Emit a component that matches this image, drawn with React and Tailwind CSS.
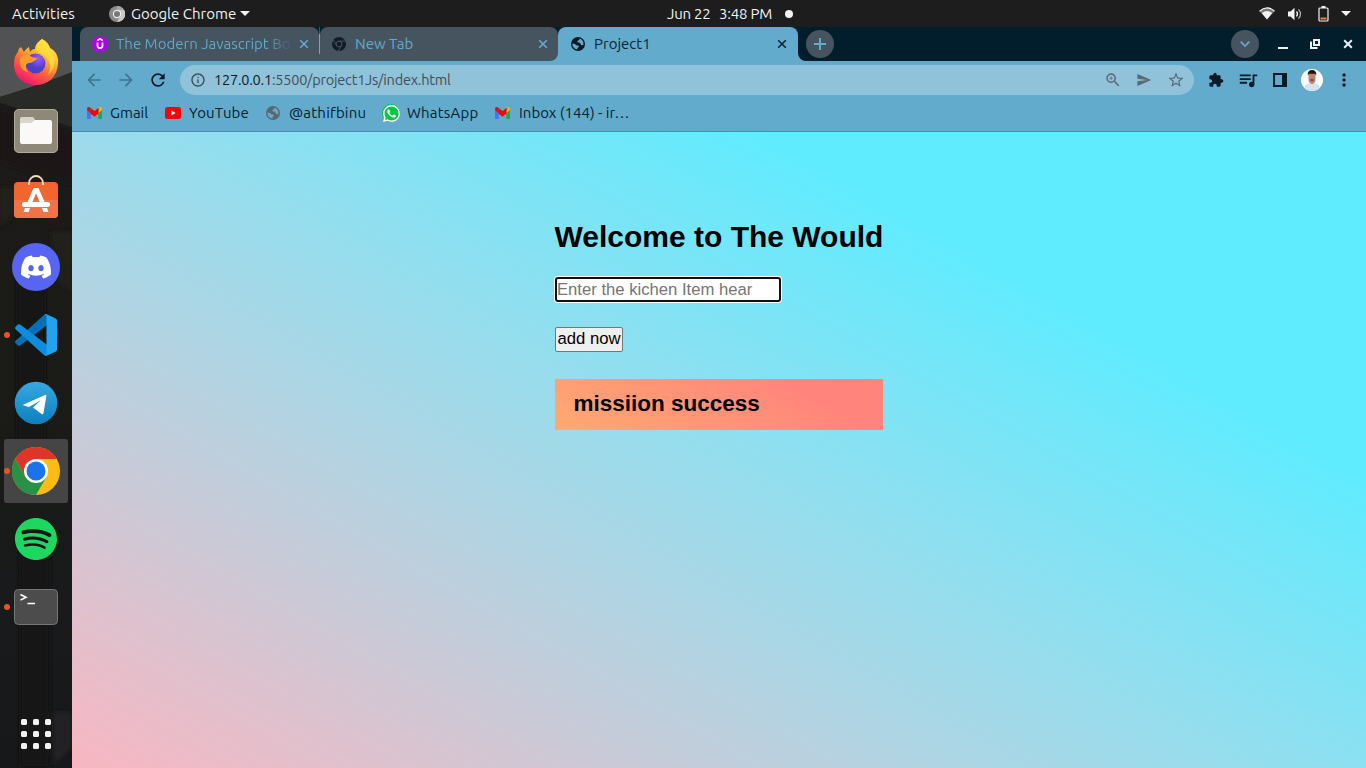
import React from 'react';
import { MdExtension, MdQueueMusic, MdSend, MdStarBorder, MdZoomIn, MdMoreVert, MdInfoOutline, MdArrowBack, MdArrowForward, MdRefresh } from 'react-icons/md';
import { SiDiscord, SiSpotify, SiWhatsapp } from 'react-icons/si';

const Close = ({ className, w = 1.6 }) => (
  <svg className={className} viewBox="0 0 10 10" stroke="currentColor" strokeWidth={w} fill="none"><path d="M1.2 1.2l7.6 7.6M8.8 1.2L1.2 8.8" /></svg>
);

const Globe = ({ className, land }) => (
  <svg className={className} viewBox="0 0 14 14">
    <circle cx="7" cy="7" r="7" fill="currentColor" />
    <path d="M8.300 1.400Q9 2.600 7.800 3.200Q6.400 3.500 6.300 4.600Q6.300 5.600 7.600 5.600Q9.400 5.600 9.600 7Q9.800 8.200 11.200 8.200L12.500 8Q12.900 4.600 11 2.900Q9.800 1.700 8.300 1.400z" fill={land} />
    <path d="M1.400 6.500L4.400 7.200Q5 8.600 6.600 8.400Q8 8.400 7.900 9.600Q7.700 10.500 6.600 10.600L6.400 12.600Q3.700 12.300 2.200 10Q1.200 8.400 1.400 6.500z" fill={land} />
  </svg>
);

const Gmail = () => (
  <svg className="h-[12px] w-[15px] shrink-0" viewBox="52 42 88 66" preserveAspectRatio="none">
    <path fill="#4275f4" d="M58 108h16V72L52 57v45c0 3.320 2.690 6 6 6" />
    <path fill="#1fa84c" d="M118 108h16c3.320 0 6-2.690 6-6V57l-22 15" />
    <path fill="#fbbc04" d="M118 48v28l22-17v-8c0-7.420-8.470-11.650-14.400-7.200" />
    <path fill="#f00" d="M72 78V46l24 18 24-18v32L96 96" />
    <path fill="#d9140f" d="M52 51v8l22 17V48l-7.600-4.200c-5.940-4.450-14.400-.22-14.400 7.200" />
  </svg>
);

function TopBar() {
  return (
    <header className="grid h-[27px] shrink-0 grid-cols-[667px_1fr_auto] items-center bg-[#1d1d1d] text-[15px] leading-none text-[#f2f2f2]">
      <div className="flex items-center">
        <span className="ml-3 w-[97px] whitespace-nowrap tracking-[0.15px]">Activities</span>
        <svg className="h-4 w-4" viewBox="0 0 16 16">
          <circle cx="8" cy="8" r="8" fill="#8b8b8b" />
          <path d="M8 0a8 8 0 0 1 7 4H8z" fill="#a7a7a7" />
          <path d="M8 4h7.200A8 8 0 0 1 8 16l3.500-6z" fill="#c9c9c9" />
          <circle cx="8" cy="8" r="4.200" fill="#eee" />
          <circle cx="8" cy="8" r="3" fill="#777" />
        </svg>
        <span className="ml-[6px] w-[109px] whitespace-nowrap">Google Chrome</span>
        <svg className="h-[5px] w-[10px]" viewBox="0 0 10 5"><path d="M0 0h10L5 5z" fill="currentColor" /></svg>
      </div>
      <div className="flex items-center whitespace-nowrap">
        <span className="w-[52px] tracking-[-0.25px]">Jun 22</span><span className="w-[66px] tracking-[-0.2px]">3:48 PM</span>
        <i className="h-2 w-2 rounded-full bg-[#f2f2f2]" />
      </div>
      <div className="flex items-center pr-[15px]">
        <svg className="h-[13px] w-4" viewBox="0 0 16 13">
          <path d="M.5 4.200Q8-2.600 15.500 4.200L8 12.500z" fill="#777" />
          <path d="M.5 4.200Q8-2.600 15.500 4.200" fill="none" stroke="#f2f2f2" strokeWidth="1.200" />
          <path d="M2.800 6Q8 2.200 13.200 6L8 12.500z" fill="#f2f2f2" />
        </svg>
        <svg className="ml-3 h-[14px] w-4" viewBox="0 0 16 14">
          <path d="M1 4.500h2.500L7.500.8v12.400L3.500 9.500H1z" fill="#f2f2f2" />
          <path d="M9.500 4.500q2 2.500 0 5" fill="none" stroke="#f2f2f2" strokeWidth="1.300" />
          <path d="M11.500 2.300q4 4.700 0 9.400" fill="none" stroke="#aaa" strokeWidth="1.300" />
        </svg>
        <svg className="ml-[15px] mr-[-1px] h-4 w-[11px]" viewBox="0 0 11 16">
          <rect x="1" y="2" width="9" height="13" rx="1" fill="none" stroke="#f2f2f2" strokeWidth="1.200" />
          <path d="M3.500 0h4v2h-4z" fill="#f2f2f2" /><path d="M2.500 11.500h6v2h-6z" fill="#f47b3c" />
        </svg>
        <svg className="ml-[13px] h-[5px] w-[10px]" viewBox="0 0 10 5"><path d="M0 0h10L5 5z" fill="currentColor" /></svg>
      </div>
    </header>
  );
}

const Dot = () => <i className="absolute left-0 top-[29px] h-[6px] w-[6px] rounded-full bg-[#e95420]" />;

function DockItem({ children, active, running }) {
  return (
    <div className={active ? 'relative flex h-16 w-16 items-center justify-center rounded-[3px] bg-[#454545]' : 'relative flex h-16 w-16 items-center justify-center'}>
      {running && <Dot />}
      {children}
    </div>
  );
}

function Wallpaper() {
  return (
    <svg className="absolute inset-0 h-full w-full" viewBox="0 0 72 741" preserveAspectRatio="none">
      <defs>
        <linearGradient id="wall" x2="0" y2="1">
          <stop offset="0" stopColor="#1d1e1b" /><stop offset=".25" stopColor="#1b1a18" /><stop offset=".55" stopColor="#1a1b17" /><stop offset=".75" stopColor="#181a1b" /><stop offset="1" stopColor="#171819" />
        </linearGradient>
        <filter id="soft"><feGaussianBlur stdDeviation="2" /></filter>
      </defs>
      <path fill="url(#wall)" d="M0 0h72v741H0z" />
      <path fill="#515253" d="M0 0h72v47L0 70z" />
      <path fill="#282a26" d="M0 70l30-9 42-16v55L0 76z" />
      <g filter="url(#soft)">
        <path fill="#1a1918" d="M0 78l72 30v50L0 135z" />
        <path fill="#22231a" d="M0 160h14l10 20-24 20zM50 205h22v60l-15-10z" opacity=".7" />
        <path fill="#171615" d="M17 240h28v200H17zM20 500h30v241H20z" />
        <path fill="#222326" d="M53 685h19v35l-18 18z" />
      </g>
    </svg>
  );
}

function Dock() {
  return (
    <aside className="relative flex w-[72px] shrink-0 flex-col bg-[#1a1a19]">
      <Wallpaper />
      <div className="relative flex flex-1 flex-col items-center gap-1 pt-[4px]">
        <DockItem>
          <svg className="h-[48px] w-[48px]" viewBox="0 0 48 48">
            <defs>
              <linearGradient id="fxa" x1=".85" y1="0" x2=".3" y2="1"><stop offset="0" stopColor="#fff14f" /><stop offset=".35" stopColor="#ffbd2e" /><stop offset=".62" stopColor="#ff6a35" /><stop offset="1" stopColor="#ed1472" /></linearGradient>
              <radialGradient id="fxb" cx=".65" cy=".25"><stop offset="0" stopColor="#a05cff" /><stop offset="1" stopColor="#4b3fc4" /></radialGradient>
            </defs>
            <path fill="url(#fxa)" d="M30 0c4 2 7 5 8 9 6 3 9 9 8 16-1 13-10 21-22 21C11 46 2 38 2 25c0-5 1-9 4-12 0-2 1-4 3-5l3 5c1-2 3-4 5-5l1 5c1-2 3-3 5-3 0-3 2-7 7-10z" />
            <path fill="#ffdf3f" d="M30 0c4 2 7 6 8 9 7 9 6 20-2 27 4-8 2-15-2-18-2-3-8-4-9-7-1-4 1-8 5-11z" opacity=".8" />
            <circle cx="23.500" cy="24.500" r="10" fill="url(#fxb)" />
            <path fill="#ff9a2d" d="M8 20c1-3 5-5 9-4 2 2 5 3 8 3l-1 2c-3 1-4 3-7 3-4 0-4 6-1 9-6-1-9-6-8-13z" />
          </svg>
        </DockItem>
        <DockItem>
          <svg className="h-[46px] w-[46px]" viewBox="0 0 46 46">
            <rect x="1" y="1" width="44" height="44" rx="5" fill="#8e8878" /><rect x="1.500" y="1.500" width="43" height="43" rx="4.500" fill="none" stroke="#b1ab9c" />
            <path fill="#d9d4c8" d="M7 11q0-2 2-2h11l3 4h13v6H7z" /><path fill="#faf9f8" d="M7 17q0-2 2-2h9l4-3h15q2 0 2 2v20q0 2-2 2H9q-2 0-2-2z" />
          </svg>
        </DockItem>
        <DockItem>
          <svg className="-mt-[5px] h-[46px] w-[46px]" viewBox="0 0 46 46">
            <rect x="1" y="8" width="44" height="36" rx="4" fill="#f26430" /><path d="M1 26h44v14q0 4-4 4H5q-4 0-4-4z" fill="#ee7448" />
            <path d="M16 11v-2a7 7 0 0 1 14 0v2" fill="none" stroke="#f1dfb7" strokeWidth="1.800" />
            <path d="M20.500 14h5l7.500 17h-5L23 19.500 18.300 31h-5zM12 34h5l-1.500 4h-5zM29 34h5l1.500 4h-5z" fill="#fff" /><rect x="9" y="28" width="28" height="5" rx="2.500" fill="#fff" />
          </svg>
        </DockItem>
        <DockItem><span className="flex h-12 w-12 items-center justify-center rounded-full bg-[#5865f2]"><SiDiscord className="h-[30px] w-[30px] text-white" /></span></DockItem>
        <DockItem running>
          <svg className="h-[42px] w-[42px]" viewBox="0 0 100 100">
            <path fill="#0070b8" d="M96.500 10.800L75.900.9c-2.400-1.100-5.200-.7-7.100 1.200L1.300 63.600c-1.800 1.700-1.800 4.500 0 6.200l5.500 5c1.500 1.300 3.700 1.400 5.300.2L93.300 13.400c2.800-2.100 6.700-.1 6.700 3.300v-.2c0-2.500-1.400-4.700-3.500-5.700z" />
            <path fill="#0d8ddb" d="M96.500 89.200l-20.600 9.900c-2.400 1.100-5.200.7-7.100-1.200L1.300 36.400c-1.800-1.700-1.800-4.500 0-6.200l5.500-5c1.500-1.300 3.700-1.400 5.300-.2L93.300 86.600c2.800 2.100 6.700.1 6.700-3.300v.2c0 2.500-1.400 4.700-3.500 5.700z" />
            <path fill="#22a3f0" d="M75.900 99.100c-2.400 1.200-5.200.7-7.100-1.200 2.300 2.300 6.200.7 6.200-2.600V4.700c0-3.300-3.900-4.900-6.200-2.600 1.900-1.900 4.700-2.400 7.100-1.200l20.600 9.900c2.100 1 3.500 3.200 3.500 5.600v67.200c0 2.400-1.400 4.600-3.500 5.600z" />
          </svg>
        </DockItem>
        <DockItem>
          <svg className="h-[44px] w-[44px]" viewBox="0 0 44 44">
            <defs><linearGradient id="tg" x2="0" y2="1"><stop stopColor="#36a9e2" /><stop offset="1" stopColor="#0d7fbd" /></linearGradient></defs>
            <circle cx="22" cy="22" r="21.300" fill="url(#tg)" /><path fill="#fff" d="M8.500 24L31 14q1.600-.6 1.300 1.300L29.500 32q-.5 2.200-2.200.8L19 26.500l8-7.500-12 7z" />
          </svg>
        </DockItem>
        <DockItem active running>
          <svg className="h-12 w-12" viewBox="0 0 48 48">
            <circle cx="24" cy="24" r="24" fill="#fbbc13" />
            <path d="M3.200 12A24 24 0 0 1 44.800 12H24L13.600 30z" fill="#df3529" />
            <path d="M3.200 12l10.400 18L24 36l10.400-6L24 48A24 24 0 0 1 3.200 12z" fill="#289146" />
            <circle cx="24" cy="24" r="12" fill="#fff" /><circle cx="24" cy="24" r="9.500" fill="#1a73e8" />
          </svg>
        </DockItem>
        <DockItem><span className="rounded-full bg-[#191414]"><SiSpotify className="h-[42px] w-[42px] text-[#1ed760]" /></span></DockItem>
        <DockItem running>
          <svg className="h-[38px] w-[46px]" viewBox="0 0 46 38">
            <rect x="1.500" y="1.500" width="43" height="35" rx="4" fill="#4c4c4c" stroke="#777" />
            <path d="M7.500 6.500l5.500 2.800-5.500 2.800M14.500 15.500h7.500" fill="none" stroke="#fff" strokeWidth="1.600" />
          </svg>
        </DockItem>
        <div className="mb-[19px] mt-auto grid grid-cols-3 gap-[6px]">
          {[0, 1, 2, 3, 4, 5, 6, 7, 8].map((n) => <i key={n} className="h-[6px] w-[6px] rounded-[1.5px] bg-[#f2f2f2]" />)}
        </div>
      </div>
    </aside>
  );
}

function TabStrip() {
  return (
    <div className="flex h-[34px] shrink-0 bg-[#021d2b] text-[15px] text-[#63abcd]">
      <div className="ml-2 flex w-[239px] items-center rounded-t-lg bg-[#46545f] pl-3">
        <svg className="h-4 w-4 shrink-0" viewBox="0 0 16 16">
          <circle cx="8" cy="8" r="8" fill="#b100ef" />
          <path d="M5.200 4.600L8 2.700l2.800 1.900M5.500 6.500v3.200q0 2.300 2.500 2.300t2.500-2.300V6.500" stroke="#fff" strokeWidth="1.700" fill="none" />
        </svg>
        <span className="ml-2 w-[176px] whitespace-nowrap bg-gradient-to-r from-[#63abcd] from-85% to-[#46545f] bg-clip-text text-transparent">The Modern Javascript Bo</span>
        <Close className="ml-[7px] h-[10px] w-[10px]" />
      </div>
      <div className="w-px bg-[#46545f] py-[7px]"><div className="h-full bg-[#63abcd]" /></div>
      <div className="flex w-[238px] bg-[linear-gradient(#021d2b_50%,#63abcd_50%)]">
        <div className="flex flex-1 items-center rounded-t-lg rounded-br-lg bg-[#46545f] pl-3">
          <svg className="h-[14px] w-[14px]" viewBox="0 0 14 14" fill="none" stroke="#46545f">
            <circle cx="7" cy="7" r="7" fill="#111c26" stroke="none" />
            <circle cx="7" cy="7" r="2.900" /><path d="M7 4.100h6.400M4.500 8.500L1.300 3M9.500 8.500L6.300 14" />
          </svg>
          <span className="ml-[9px] flex-1">New Tab</span>
          <Close className="mr-[10px] h-[10px] w-[10px]" />
        </div>
      </div>
      <div className="flex w-[240px] items-center rounded-t-lg bg-[#63abcd] pl-[13px] text-[#0b2330]">
        <Globe className="h-[14px] w-[14px] text-[#0b1a25]" land="#63abcd" />
        <span className="ml-[9px] flex-1">Project1</span>
        <Close className="mr-[11px] h-[10px] w-[10px]" />
      </div>
      <div className="flex flex-1 bg-[linear-gradient(#021d2b_50%,#63abcd_50%)]">
        <div className="flex flex-1 items-center rounded-bl-lg bg-[#021d2b] pl-2">
          <span className="flex h-7 w-7 items-center justify-center rounded-full bg-[#46545f]"><svg className="h-3 w-3" viewBox="0 0 12 12" stroke="#63abcd" strokeWidth="2"><path d="M6 0v12M0 6h12" /></svg></span>
          <span className="ml-auto flex h-7 w-7 items-center justify-center rounded-full bg-[#46545f]"><svg className="h-[6px] w-[10px]" viewBox="0 0 10 6" fill="none" stroke="#63abcd" strokeWidth="1.700"><path d="M.7.7L5 5 9.300.7" /></svg></span>
          <i className="ml-[19px] mt-[8px] h-[2px] w-[10px] bg-[#f0f0f0]" />
          <svg className="ml-[22px] h-[10px] w-[10px]" viewBox="0 0 10 10" fill="none" stroke="#f0f0f0" strokeWidth="2"><path d="M4 1h5v5H4z" /><path d="M1 2.500V9h6.500" /></svg>
          <Close className="ml-[23px] mr-[13px] h-[10px] w-[10px] text-[#f0f0f0]" w={2} />
        </div>
      </div>
    </div>
  );
}

function Toolbar() {
  return (
    <div className="flex h-[38px] shrink-0 items-center bg-[#63abcd] text-[#0b1a25]">
      <MdArrowBack className="ml-3 h-5 w-5 text-[#3c7490]" />
      <MdArrowForward className="ml-3 h-5 w-5 text-[#3c7490]" />
      <MdRefresh className="ml-3 h-5 w-5" />
      <div className="ml-3 flex h-[30px] w-[1014px] items-center rounded-full bg-[#90c2d9] text-[#596b75]">
        <MdInfoOutline className="ml-[10px] h-4 w-4 text-[#3a4d59]" />
        <span className="ml-2 flex-1 whitespace-nowrap text-[14.5px] tracking-[-0.21px] text-[#3f4f5a]"><span className="text-[#0b1a25]">127.0.0.1</span>:5500/project1Js/index.html</span>
        <MdZoomIn className="h-[18px] w-[18px]" />
        <MdSend className="ml-[14px] h-4 w-4" />
        <MdStarBorder className="ml-[15px] mr-[9px] h-[18px] w-[18px]" />
      </div>
      <MdExtension className="ml-[14px] h-4 w-4" />
      <MdQueueMusic className="ml-[13px] h-[22px] w-[22px]" />
      <svg className="ml-[14px] h-[14px] w-[14px]" viewBox="0 0 14 14"><path d="M0 0h14v14H0zM2 2v10h7V2z" fill="currentColor" fillRule="evenodd" /></svg>
      <svg className="ml-[14px] h-[22px] w-[22px] overflow-hidden rounded-full" viewBox="0 0 22 22">
        <path fill="#fff" d="M0 0h22v22H0z" /><path fill="#d4e3f4" d="M3 22l1-6 5-2h4l5 2 1 6z" />
        <path fill="#b98470" d="M7.500 4h7v7q-1 4-3.500 4T7.500 11z" /><path fill="#1a1718" d="M6.800 6.500Q6.300 1 11 1t4.300 5.500L14 4.800H8zM9.300 10.800q1.700-.8 3.400 0l-.4.700H9.700z" />
      </svg>
      <MdMoreVert className="ml-[11px] h-5 w-5" />
    </div>
  );
}

function Bookmarks() {
  return (
    <div className="flex h-[33px] shrink-0 items-center whitespace-nowrap border-b border-[#4c8ba9] bg-[#63abcd] pb-1 pl-[15px] text-[15px] text-[#06202c]">
      <Gmail /><span className="ml-2 w-[55px]">Gmail</span>
      <svg className="h-3 w-4" viewBox="0 0 16 12"><rect width="16" height="12" rx="2.500" fill="#f00" /><path d="M6.500 3.500v5l4-2.500z" fill="#fff" /></svg>
      <span className="ml-2 w-[76px] tracking-[0.15px]">YouTube</span>
      <Globe className="ml-[1px] h-[14px] w-[14px] text-[#5a6670]" land="#63abcd" /><span className="ml-[9px] w-[93px] tracking-[0.2px]">@athifbinu</span>
      <span className="flex h-[18px] w-[18px] items-center justify-center rounded-full bg-[#08c845]"><SiWhatsapp className="h-[17px] w-[17px] text-white" /></span>
      <span className="ml-[7px] w-[88px] tracking-[0.2px]">WhatsApp</span>
      <Gmail /><span className="ml-[9px]">Inbox (144) - ir…</span>
    </div>
  );
}

function Page() {
  return (
    <main className="flex flex-1 flex-col items-start bg-[linear-gradient(30deg,#f8b7c2_0%,#add6e5_37.5%,#60ecff_75%)] pl-[483px] pt-[87px] font-['Liberation_Sans',Arial,sans-serif] text-black">
      <h1 className="ml-[-0.5px] h-[36px] whitespace-nowrap text-[30px] font-bold leading-[36px]">Welcome to The Would</h1>
      <input className="mt-[22px] h-[25px] w-[226px] rounded-[3px] border-2 border-[#101010] bg-white text-[16.67px] leading-[21px] shadow-[0_0_0_1px_white] outline-none placeholder:text-[#757575]" placeholder="Enter the kichen Item hear" />
      <button className="mt-[25px] flex h-[25px] w-[68px] justify-center rounded-[2px] border border-[#767676] bg-[#efefef] text-[16.67px] leading-[22px]">add now</button>
      <div className="mt-[27px] h-[51px] w-[328px] bg-[linear-gradient(30deg,#ffaa70_0%,#ff857c_75%)] pl-[18.5px] text-[22.5px] font-bold leading-[49px]">missiion success</div>
    </main>
  );
}

export default function App() {
  return (
    <div className="flex h-[768px] w-[1366px] flex-col overflow-hidden font-['Ubuntu','Noto_Sans',sans-serif]">
      <TopBar />
      <div className="flex min-h-0 flex-1">
        <Dock />
        <section className="flex min-w-0 flex-1 flex-col"><TabStrip /><Toolbar /><Bookmarks /><Page /></section>
      </div>
    </div>
  );
}
